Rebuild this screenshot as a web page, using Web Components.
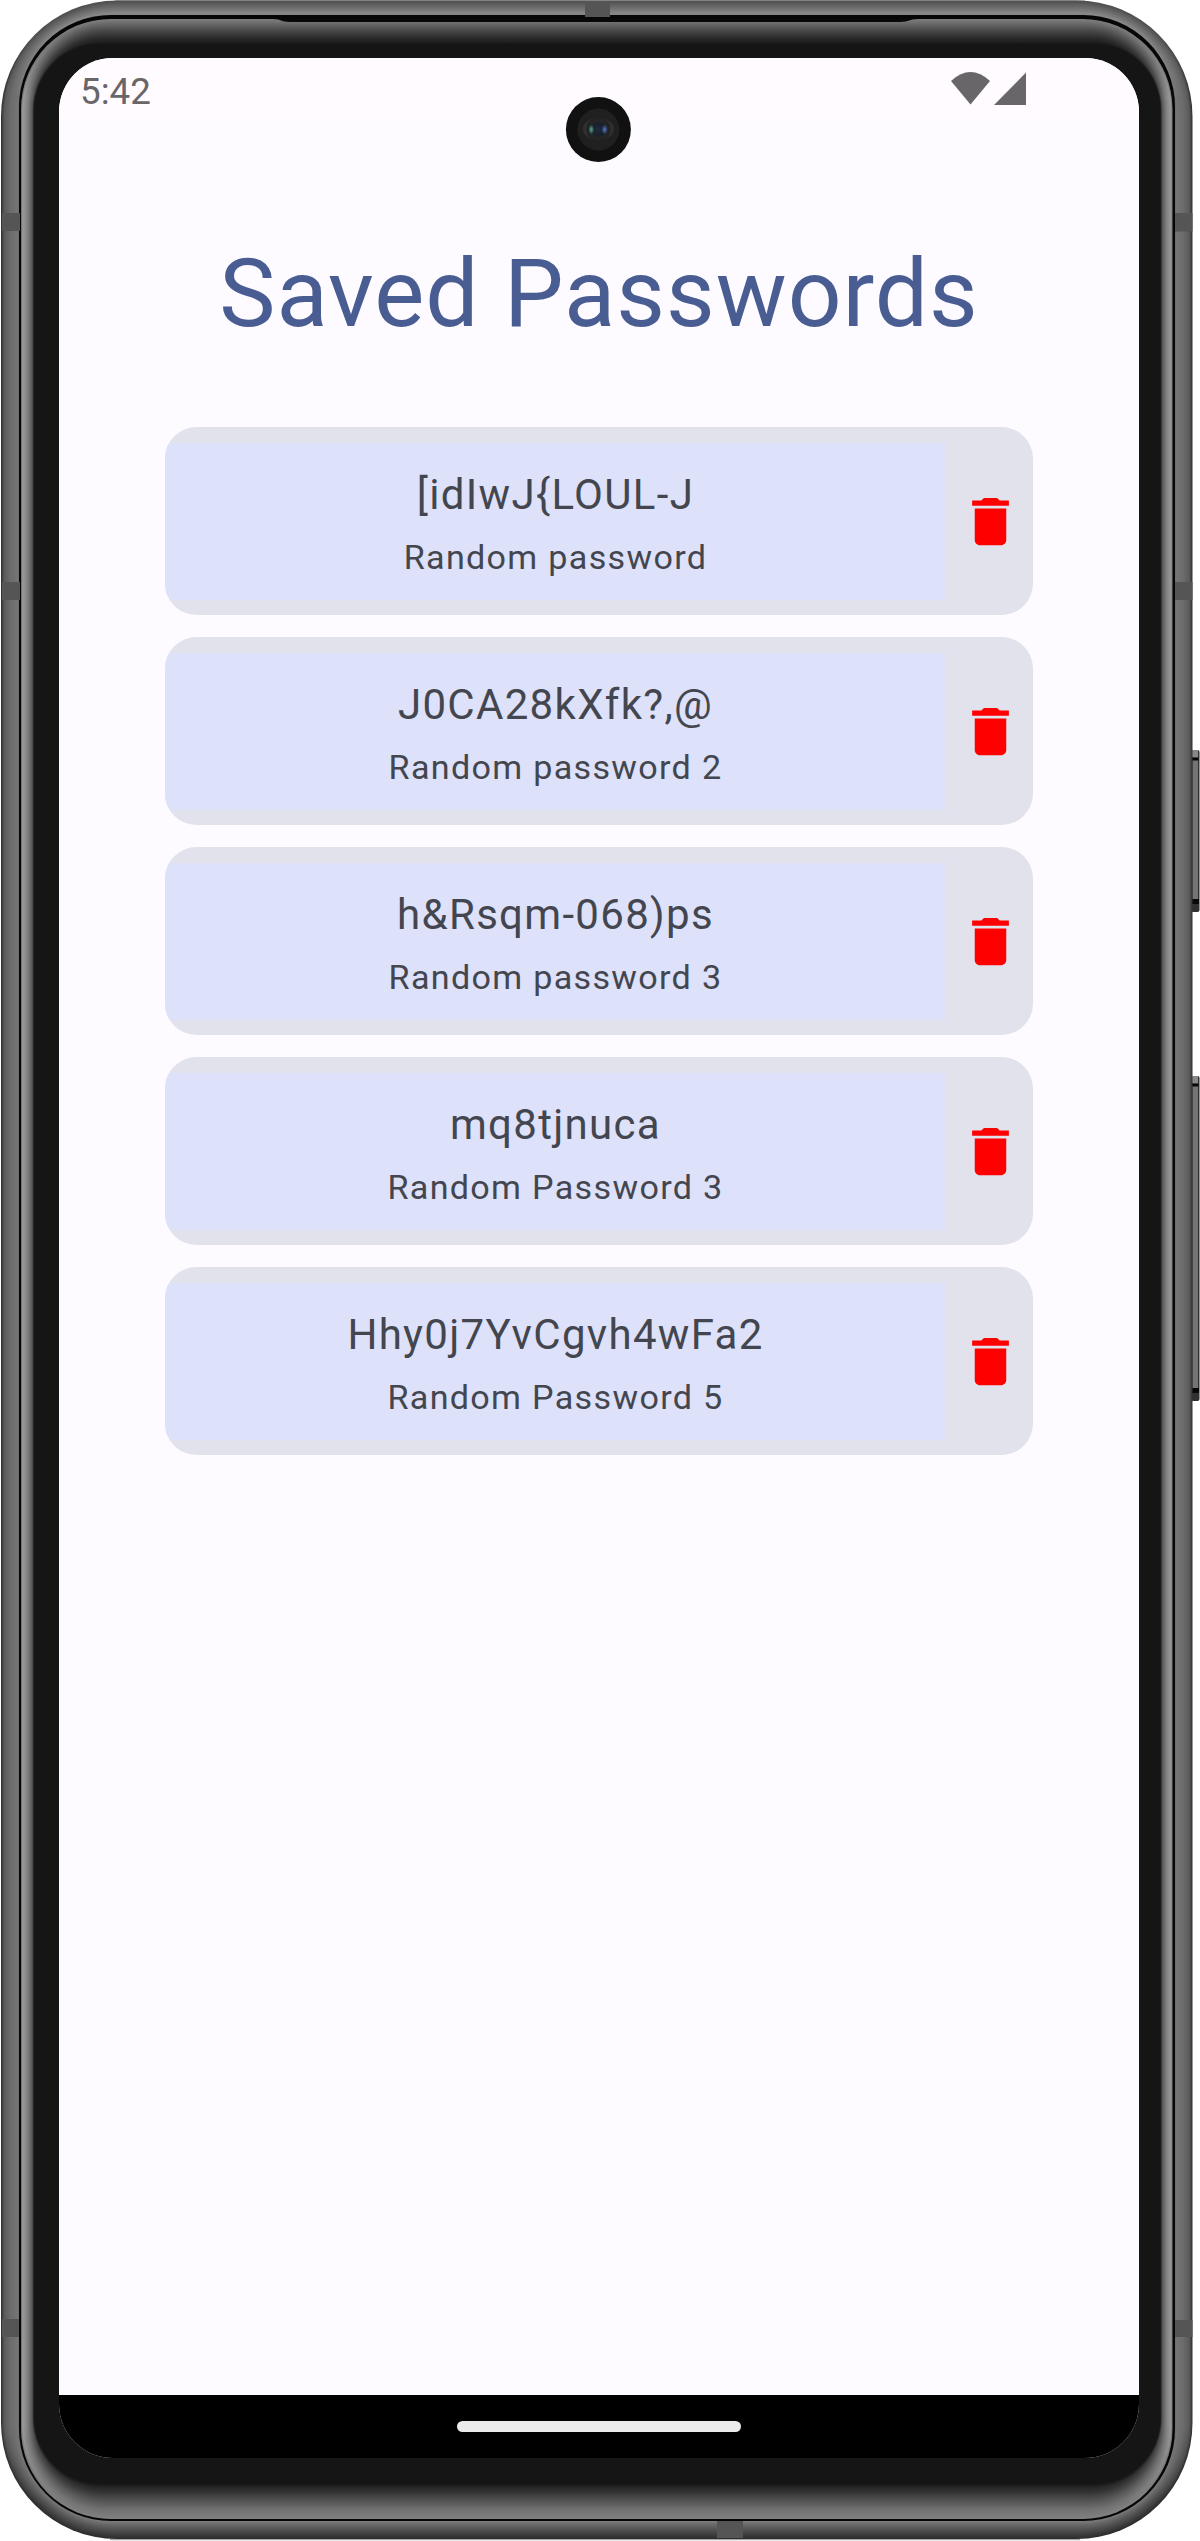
<!DOCTYPE html>
<html lang="en">
<head>
<meta charset="utf-8">
<title>Saved Passwords</title>
<style>
html,body{margin:0;padding:0;background:#fff}
body{width:1200px;height:2541px;overflow:hidden;font-family:Roboto,"Liberation Sans",sans-serif}
</style>
</head>
<body>
<device-frame>
  <status-bar time="5:42"></status-bar>
  <screen-title>Saved Passwords</screen-title>
  <password-list>
    <password-card label="Random password">[idIwJ{LOUL-J</password-card>
    <password-card label="Random password 2">J0CA28kXfk?,@</password-card>
    <password-card label="Random password 3">h&amp;Rsqm-068)ps</password-card>
    <password-card label="Random Password 3">mq8tjnuca</password-card>
    <password-card label="Random Password 5">Hhy0j7YvCgvh4wFa2</password-card>
  </password-list>
  <nav-bar></nav-bar>
</device-frame>
<script>
const lerp=(a,b,t)=>a+(b-a)*t;
const grey=v=>{v=Math.round(v);return `rgb(${v},${v},${v})`};
// piecewise-linear lookup in a list of [position, value]
function curve(pts,t){
  for(let i=1;i<pts.length;i++) if(t<=pts[i][0]){
    const [a,va]=pts[i-1],[b,vb]=pts[i];
    return lerp(va,vb,(t-a)/(b-a));
  }
  return pts[pts.length-1][1];
}
// nested rounded rectangles from an outer box to an inner one, shaded per side
function bevel(id,o,n,steps,top,side,bottom){
  let defs='',out='';
  for(let i=0;i<=steps;i++){
    const t=i/steps,l=lerp(o[0],n[0],t),y=lerp(o[1],n[1],t),r=lerp(o[2],n[2],t),b=lerp(o[3],n[3],t),q=lerp(o[4],n[4],t);
    const T=grey(curve(top,t)),S=grey(curve(side,t)),B=grey(curve(bottom,t));
    defs+=`<linearGradient id="${id}${i}" gradientUnits="userSpaceOnUse" x1="0" y1="0" x2="0" y2="2541"><stop offset=".012" stop-color="${T}"/><stop offset=".038" stop-color="${S}"/><stop offset=".955" stop-color="${S}"/><stop offset=".985" stop-color="${B}"/></linearGradient>`;
    out+=`<rect x="${l}" y="${y}" width="${r-l}" height="${b-y}" rx="${q}" fill="url(#${id}${i})"/>`;
  }
  return `<defs>${defs}</defs>${out}`;
}
customElements.define('device-frame',class extends HTMLElement{
  connectedCallback(){
    const root=this.attachShadow({mode:'open'});
    const rim=bevel('r',[1,.5,1192.5,2539,116],[19,15,1175,2521,94],18,
      [[0,78],[.3,98],[.9,138],[1,125]],[[0,52],[.15,90],[.5,108],[.9,116],[1,104]],[[0,45],[.5,82],[.85,112],[1,130]]);
    const glass=bevel('g',[21,19,1172.5,2519,90],[34,44,1160.5,2484,66],40,
      [[0,125],[.15,108],[.5,66],[.8,30],[1,21]],[[0,105],[.12,154],[.5,128],[.85,85],[1,21]],[[0,128],[.25,114],[.5,84],[.8,38],[1,21]]);
    const band=(x,y,w,h)=>`<rect x="${x}" y="${y}" width="${w}" height="${h}" fill="#555"/>`;
    const key=(y,h)=>`<rect x="1191" y="${y}" width="8.5" height="${h}" rx="2" fill="#303030"/><rect x="1192.5" y="${y+1}" width="5.5" height="${h-14}" fill="#747474"/><rect x="1192" y="${y}" width="6" height="7" fill="#888"/><rect x="1192" y="${y+7.5}" width="6.5" height="3" fill="#080808"/><rect x="1192" y="${y+h-13}" width="7" height="5" fill="#080808"/>`;
    root.innerHTML=`<style>
      :host{display:block;position:relative;width:1200px;height:2541px;box-sizing:border-box;padding:58px 61px 83px 59px}
      .shell,.camera{position:absolute;display:block}
      .shell{left:0;top:0}
      .camera{left:565px;top:96px}
      .screen{position:relative;display:flex;flex-direction:column;width:1080px;height:2400px;border-radius:54px;overflow:hidden;background:#fdfbff}
    </style>
    <svg class="shell" width="1200" height="2541" viewBox="0 0 1200 2541">
      ${key(750,162)}${key(1076,325)}
      <path d="M115 .8H1085" stroke="#b5bdb6" stroke-width="1.6"/><path d="M110 2539.2H1080" stroke="#aaa" stroke-width="2"/>
      ${rim}
      <rect x="19" y="15" width="1156" height="2506" rx="92" fill="#060606"/>
      ${band(2,213,18,18)}${band(2,582,18,18)}${band(2,2319,17,18)}
      ${band(1175,213,17.5,18.5)}${band(1175,582,17.5,18)}${band(1175,2320,17.5,17)}
      ${band(585,1,25,16)}${band(717,2521,26,17)}
      ${glass}
      <path d="M273 19C282 19 280 22 290 22H900C910 22 908 19 919 19V18H273Z" fill="#080808"/>
    </svg>
    <div class="screen"><slot></slot></div>
    <svg class="camera" width="66" height="66" viewBox="0 0 66 66">
      <defs><radialGradient id="lens"><stop offset="0" stop-color="#202b3b"/><stop offset=".5" stop-color="#18202a"/><stop offset=".75" stop-color="#262626"/><stop offset="1" stop-color="#202020"/></radialGradient>
      <radialGradient id="teal"><stop offset="0" stop-color="#54a89d"/><stop offset="1" stop-color="#54a89d" stop-opacity="0"/></radialGradient>
      <radialGradient id="blue"><stop offset="0" stop-color="#5478cc"/><stop offset="1" stop-color="#5478cc" stop-opacity="0"/></radialGradient></defs>
      <circle cx="33.4" cy="33.5" r="32.5" fill="#111"/><circle cx="33.4" cy="33.5" r="21" fill="#202020"/>
      <ellipse cx="33.4" cy="33" rx="15.5" ry="11" fill="#303030"/><circle cx="33.4" cy="33.3" r="12" fill="url(#lens)"/>
      <ellipse cx="26.3" cy="33.5" rx="3" ry="5" fill="url(#teal)"/><ellipse cx="39.6" cy="33.5" rx="3.2" ry="5" fill="url(#blue)"/>
    </svg>`;
  }
});
customElements.define('status-bar',class extends HTMLElement{
  connectedCallback(){
    this.attachShadow({mode:'open'}).innerHTML=`<style>
      :host{display:flex;justify-content:space-between;flex:none;height:63px;box-sizing:border-box;padding:0 113px 0 21px;background:#fffbff;color:#69666a;font-size:36.75px;line-height:68px}
      svg{display:block;margin-top:14px}
    </style><span>${this.getAttribute('time')}</span>
    <svg width="76" height="34" viewBox="0 0 76 34" fill="currentColor"><path d="M1 9Q20.500 -8.800 40 9L20.500 32.500Z"/><path d="M44 33L76 .5V33Z"/></svg>`;
  }
});
customElements.define('screen-title',class extends HTMLElement{
  connectedCallback(){
    this.attachShadow({mode:'open'}).innerHTML=`<style>
      :host{display:block;flex:none;height:306px;box-sizing:border-box;padding-top:117px;text-align:center;color:#495d92;font-size:94.5px;line-height:112px;letter-spacing:.95px;white-space:nowrap}
    </style><slot></slot>`;
  }
});
customElements.define('password-list',class extends HTMLElement{
  connectedCallback(){
    this.attachShadow({mode:'open'}).innerHTML=`<style>
      :host{display:flex;flex-direction:column;flex:1;gap:22px;padding:0 106px}
    </style><slot></slot>`;
  }
});
customElements.define('password-card',class extends HTMLElement{
  connectedCallback(){
    this.attachShadow({mode:'open'}).innerHTML=`<style>
      :host{display:flex;align-items:center;height:188px;box-sizing:border-box;border-radius:31.5px;overflow:hidden;background:#e1e2ec;color:#44464f}
      .text{width:781px;height:157px;box-sizing:border-box;background:#dde1f9;display:flex;flex-direction:column;align-items:center;padding-top:20px;white-space:nowrap}
      .pw{font-size:42px;line-height:63px;letter-spacing:1.31px}
      .label{font-size:34.125px;line-height:63px;letter-spacing:1.31px}
      svg{display:block;margin-left:13px}
    </style><div class="text"><div class="pw"><slot></slot></div><div class="label">${this.getAttribute('label')}</div></div>
    <svg width="63" height="63" viewBox="0 0 24 24" fill="#f00"><path d="M6 19c0 1.1.9 2 2 2h8c1.100 0 2-.9 2-2V7H6v12zM19 4h-3.500l-1-1h-5l-1 1H5v2h14V4z"/></svg>`;
  }
});
customElements.define('nav-bar',class extends HTMLElement{
  connectedCallback(){
    this.attachShadow({mode:'open'}).innerHTML=`<style>
      :host{display:flex;justify-content:center;align-items:center;flex:none;height:63px;background:#000}
      i{width:284px;height:11px;border-radius:6px;background:#ebebeb}
    </style><i></i>`;
  }
});
</script>
</body>
</html>
